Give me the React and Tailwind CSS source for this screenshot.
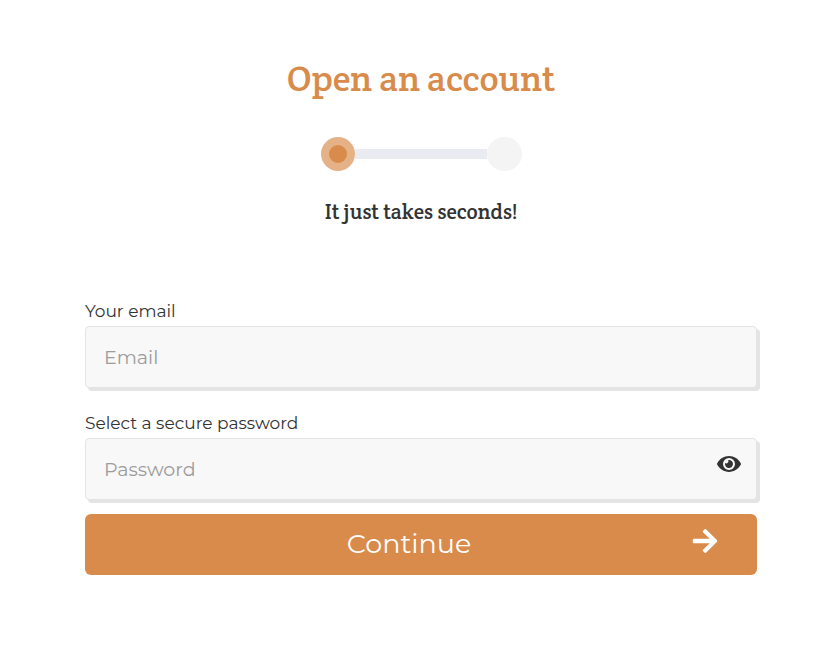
import React, { useState } from 'react';
import { FaEye, FaArrowRight } from 'react-icons/fa';

const inputClass =
    'block h-[62px] w-full rounded border border-[#e4e4e4] bg-[#f8f8f8] px-[18px] text-[19px] text-[#333333] shadow-[3px_3px_0_#e4e4e4] outline-none placeholder:text-[#9c9c9c]';
const labelClass = 'block h-[25px] text-[17px] leading-5 text-[#333333]';

function Steps() {
    return (<div className="mt-[35px] flex items-center justify-center">
      <div className="flex size-[34px] items-center justify-center rounded-full bg-[#e5b186]">
        <div className="size-[18px] rounded-full bg-[#d88b4a]"/>
      </div>
      <div className="h-[10px] w-[132px] bg-[#eaebf0]"/>
      <div className="h-[34px] w-[35px] rounded-full bg-[#f4f4f4]"/>
    </div>);
}

export default function App() {
    const [email, setEmail] = useState('');
    const [password, setPassword] = useState('');
    const [visible, setVisible] = useState(false);
    return (<main className="min-h-screen bg-white pt-[54px] pr-[73px] pl-[85px] font-['Montserrat','Inter',sans-serif]">
      <header className="text-center font-['Crete_Round','DejaVu_Serif_Condensed','DejaVu_Serif',serif]">
        <h1 className="text-[36px] leading-[48px] text-[#d88b4a]">Open an account</h1>
        <Steps />
        <p className="mt-7 text-[21px] leading-[26px] text-[#333333]">It just takes seconds!</p>
      </header>

      <form className="mt-[76px]" onSubmit={(e) => e.preventDefault()}>
        <label htmlFor="email" className={labelClass}>Your email</label>
        <input id="email" type="email" placeholder="Email" value={email} onChange={(e) => setEmail(e.target.value)} className={inputClass}/>

        <label htmlFor="password" className={`mt-[25px] ${labelClass}`}>Select a secure password</label>
        <div className="relative">
          <input id="password" type={visible ? 'text' : 'password'} placeholder="Password" value={password} onChange={(e) => setPassword(e.target.value)} className={inputClass}/>
          <button type="button" aria-label="Show password" onClick={() => setVisible(!visible)} className="absolute top-[14px] right-4 text-[#333333]">
            <FaEye className="size-6"/>
          </button>
        </div>

        <button type="submit" className="mt-[14px] flex h-[61px] w-full items-center rounded-md bg-[#d88b4a] pr-[38px] pl-[42px] text-[27px] text-white">
          <span className="flex-1 text-center">Continue</span>
          <FaArrowRight className="mb-2 size-7"/>
        </button>
      </form>
    </main>);
}
